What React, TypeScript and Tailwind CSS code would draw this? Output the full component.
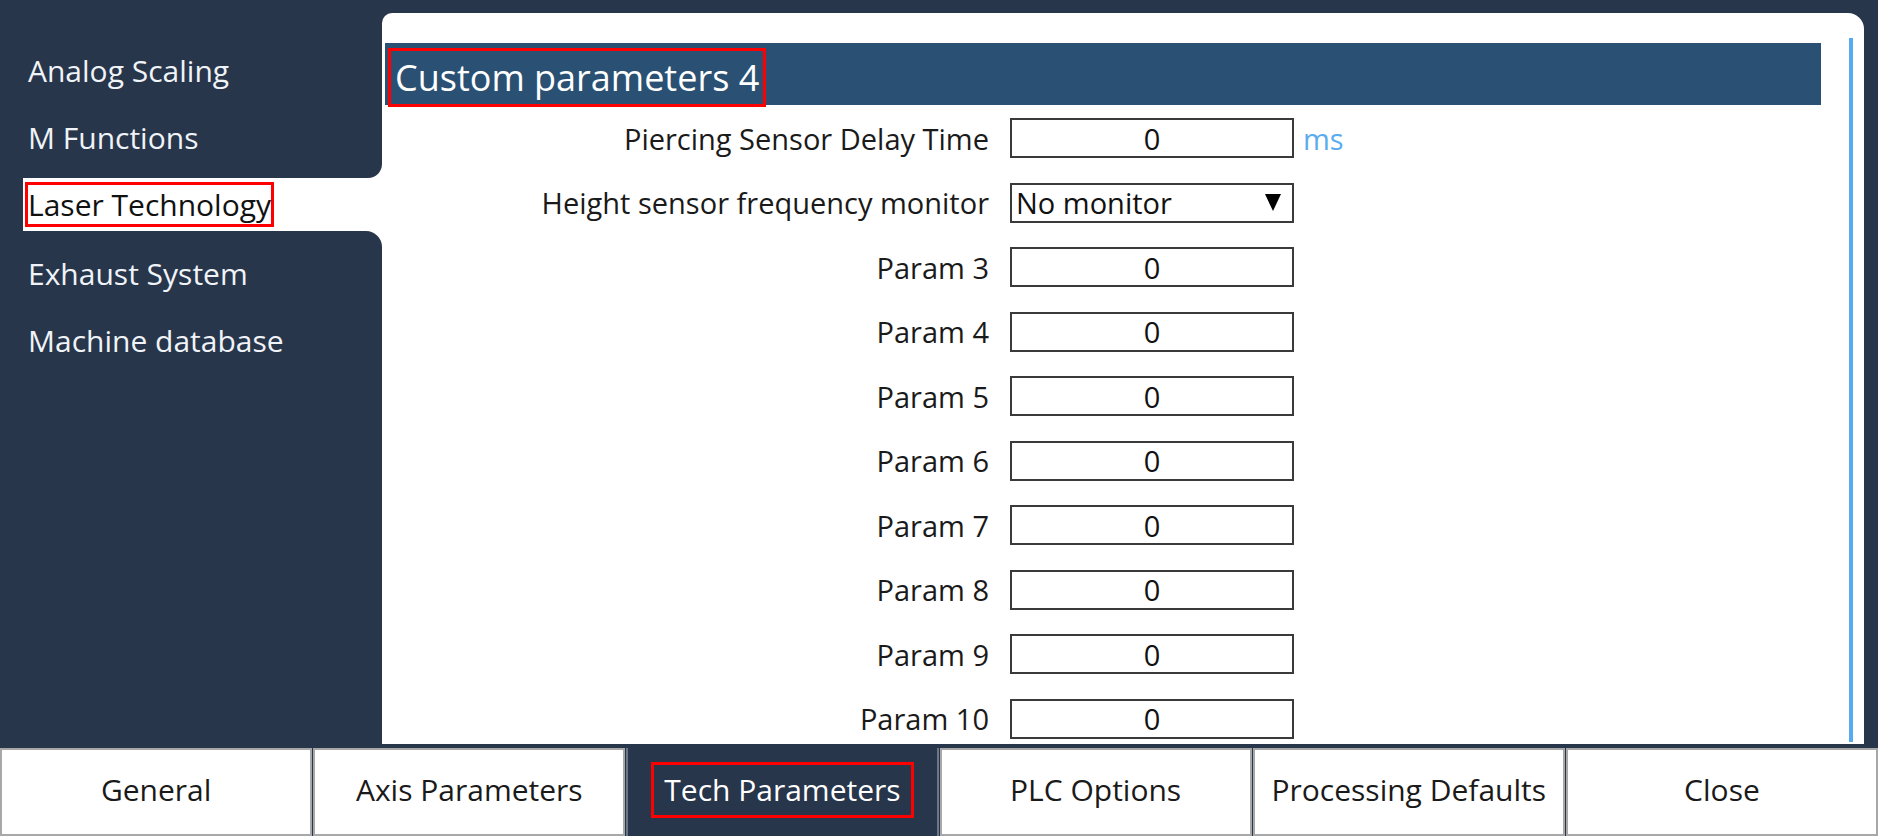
import React from "react";

const navTop = ["Analog Scaling", "M Functions"];
const navBottom = ["Exhaust System", "Machine database"];
const tabs = ["General", "Axis Parameters", "Tech Parameters", "PLC Options", "Processing Defaults", "Close"];
const params = ["Param 3", "Param 4", "Param 5", "Param 6", "Param 7", "Param 8", "Param 9", "Param 10"];

function NavItem({ label }: { label: string }) {
  return (
    <div className="flex h-[67px] items-center pl-[28px] text-[30px] text-[#f0f3f7]">{label}</div>
  );
}

function ValueBox({ value = "0" }: { value?: string }) {
  return (
    <div className="flex h-[40px] w-[284px] items-center justify-center border-2 border-[#3a3a3a] bg-white text-[29px] text-[#111]">
      {value}
    </div>
  );
}

function FormRow({ label, children }: { label: string; children: React.ReactNode }) {
  return (
    <div className="flex h-[40px] items-center gap-[21px]">
      <div className="w-[604px] text-right text-[29px] text-[#1a1a1a]">{label}</div>
      {children}
    </div>
  );
}

export default function App() {
  return (
    <div className="flex h-[836px] w-[1878px] flex-col overflow-hidden bg-[#27364b] font-['Open_Sans',sans-serif] leading-none">
      <div className="flex h-[748px]">
        {/* side menu */}
        <div className="flex w-[382px] flex-col bg-white">
          <div className="h-[178px] rounded-br-[14px] bg-[#27364b] pt-[37px]">
            {navTop.map((item) => (
              <NavItem key={item} label={item} />
            ))}
          </div>
          <div className="flex h-[53px]">
            <div className="w-[23px] bg-[#27364b]" />
            <div className="flex flex-1 items-center bg-white">
              <span className="ml-[2px] flex h-[45px] items-center border-[3px] border-[#f00] text-[30px] text-[#111]">
                Laser Technology
              </span>
            </div>
          </div>
          <div className="flex-1 rounded-tr-[16px] bg-[#27364b] pt-[9px]">
            {navBottom.map((item) => (
              <NavItem key={item} label={item} />
            ))}
          </div>
        </div>

        {/* content panel */}
        <div className="mb-[4px] mr-[14px] mt-[13px] flex flex-1 rounded-tl-[10px] rounded-tr-[16px] bg-white pl-[3px]">
          <div className="flex min-w-0 flex-1 flex-col overflow-hidden pt-[30px]">
            <div className="h-[62px] bg-[#2a5173]">
              <div className="ml-[3px] mt-[5px] inline-flex h-[59px] items-center border-[3px] border-[#f00] pl-[4px] pr-[4px] text-[36px] text-white">
                Custom parameters 4
              </div>
            </div>
            <div className="mt-[13px] flex flex-col gap-[24.5px]">
              <FormRow label="Piercing Sensor Delay Time">
                <ValueBox />
                <span className="-ml-[12px] text-[29px] text-[#5aacee]">ms</span>
              </FormRow>
              <FormRow label="Height sensor frequency monitor">
                <div className="flex h-[40px] w-[284px] items-center justify-between border-2 border-[#3a3a3a] bg-white pl-[4px] pr-[11px] text-[29px] text-[#111]">
                  <span>No monitor</span>
                  <svg width="16" height="17" viewBox="0 0 16 17">
                    <polygon points="0,0 16,0 8,17" fill="#000" />
                  </svg>
                </div>
              </FormRow>
              {params.map((p) => (
                <FormRow key={p} label={p}>
                  <ValueBox />
                </FormRow>
              ))}
            </div>
          </div>
          <div className="mb-[2px] ml-[28px] mr-[11px] mt-[25px] w-[4px] bg-[#55aaf0]" />
        </div>
      </div>

      {/* bottom tabs */}
      <div className="flex h-[88px] gap-[1px]">
        {tabs.map((tab) => {
          const active = tab === "Tech Parameters";
          return (
            <div
              key={tab}
              className={
                active
                  ? "flex flex-1 items-center justify-center border-x-2 border-x-[#6b7686] bg-[#27364b] pb-[4px] text-[30px] text-white"
                  : "flex flex-1 items-center justify-center border-2 border-[#a8a8a8] bg-white pb-[4px] text-[30px] text-[#1a1a1a]"
              }
            >
              {active ? (
                <span className="flex h-[56px] items-center border-[3px] border-[#f00] px-[10px]">{tab}</span>
              ) : (
                tab
              )}
            </div>
          );
        })}
      </div>
    </div>
  );
}
